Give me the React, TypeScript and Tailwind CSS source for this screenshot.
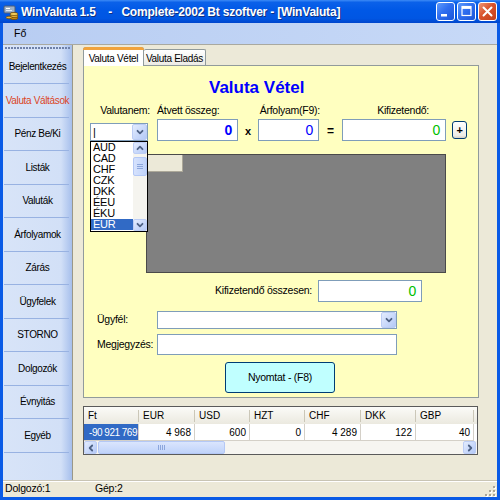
import React from 'react';

type Dir = 'down' | 'up' | 'left' | 'right';

const ARROWS: Record<Dir, string> = {
  down: 'M2.5 3.8 L5 6.3 L7.5 3.8',
  up: 'M2.5 6.2 L5 3.7 L7.5 6.2',
  left: 'M6.2 2.5 L3.7 5 L6.2 7.5',
  right: 'M3.8 2.5 L6.3 5 L3.8 7.5',
};

function ArrowBtn({ dir, className = '' }: { dir: Dir; className?: string }) {
  return (
    <div
      className={`flex shrink-0 items-center justify-center rounded-[2px] border border-[#bccdf5] bg-[linear-gradient(to_bottom_right,#e3ecfe,#b4c9f7)] ${className}`}
    >
      <svg width="10" height="10" viewBox="0 0 10 10">
        <path d={ARROWS[dir]} fill="none" stroke="#4d6185" strokeWidth="1.8" strokeLinecap="round" strokeLinejoin="round" />
      </svg>
    </div>
  );
}

function AppIcon() {
  return (
    <svg width="16" height="16" viewBox="0 0 16 16" className="shrink-0">
      <rect x="1" y="2" width="11" height="7" rx="1" fill="#9fb1c6" stroke="#4b5d78" strokeWidth="1" />
      <rect x="3" y="4" width="4" height="1" fill="#ffffff" />
      <rect x="3" y="6" width="6" height="1" fill="#dfe7f1" />
      <ellipse cx="11" cy="14" rx="4" ry="1.6" fill="#c98a12" stroke="#6b4300" strokeWidth="0.7" />
      <ellipse cx="11" cy="12" rx="4" ry="1.6" fill="#e6b43a" stroke="#6b4300" strokeWidth="0.7" />
      <ellipse cx="11" cy="10" rx="4" ry="1.6" fill="#f3cd5a" stroke="#6b4300" strokeWidth="0.7" />
      <ellipse cx="6" cy="13.5" rx="3" ry="1.3" fill="#e6b43a" stroke="#6b4300" strokeWidth="0.7" />
    </svg>
  );
}

function WinBtn({ kind }: { kind: 'min' | 'max' | 'close' }) {
  const bg =
    kind === 'close'
      ? 'bg-[linear-gradient(to_bottom_right,#f09575,#d9532c_45%,#c2401c)]'
      : 'bg-[linear-gradient(to_bottom_right,#5f9bfc,#2f6ef0_45%,#1c55d8)]';
  return (
    <div className={`flex h-[19px] w-[19px] items-center justify-center rounded-[3px] border border-white ${bg}`}>
      <svg width="17" height="17" viewBox="0 0 17 17">
        {kind === 'min' && <rect x="4" y="11" width="6" height="2.5" fill="#ffffff" />}
        {kind === 'max' && (
          <>
            <rect x="4" y="3.5" width="9" height="9" fill="none" stroke="#ffffff" strokeWidth="1.2" />
            <rect x="4" y="3.5" width="9" height="2.4" fill="#ffffff" />
          </>
        )}
        {kind === 'close' && (
          <path d="M4.5 4.5 L12.5 12.5 M12.5 4.5 L4.5 12.5" stroke="#ffffff" strokeWidth="2" strokeLinecap="round" />
        )}
      </svg>
    </div>
  );
}

function TitleBar() {
  return (
    <div className="flex h-[23px] shrink-0 items-center bg-[linear-gradient(to_bottom,#3d8bf6_0%,#0b61e9_10%,#0058e6_45%,#0056e3_80%,#0046cc_100%)] pl-[3px] pr-[3px]">
      <AppIcon />
      <span className="ml-[2px] whitespace-pre text-[12px] font-bold tracking-[-0.2px] text-white [text-shadow:1px_1px_0_#10307f]">
        WinValuta 1.5    -   Complete-2002 Bt szoftver - [WinValuta]
      </span>
      <div className="ml-auto flex gap-[2px]">
        <WinBtn kind="min" />
        <WinBtn kind="max" />
        <WinBtn kind="close" />
      </div>
    </div>
  );
}

const menuItems = [
  'Bejelentkezés',
  'Valuta Váltások',
  'Pénz Be/Ki',
  'Listák',
  'Valuták',
  'Árfolyamok',
  'Zárás',
  'Ügyfelek',
  'STORNO',
  'Dolgozók',
  'Évnyitás',
  'Egyéb',
];

function Sidebar() {
  return (
    <div className="flex w-[69px] shrink-0 flex-col bg-[linear-gradient(to_right,#d8e4f8_0%,#d2e0f7_84%,#a6bfec_100%)]">
      <div className="mx-[2px] mt-[2px] h-[2px] bg-[repeating-linear-gradient(to_right,#6f81a9_0_2px,transparent_2px_3px)]" />
      <div className="h-[1.5px]" />
      {menuItems.map((label, i) => (
        <div key={label}>
          <div
            className={`flex h-[32.5px] items-center justify-center whitespace-nowrap text-[10px] tracking-[-0.35px] ${i === 1 ? 'text-[#db4525]' : 'text-black'}`}
          >
            {label}
          </div>
          <div className="ml-[1px] mr-[3px] h-px bg-[#98b2e2]" />
        </div>
      ))}
    </div>
  );
}

function Combo({ className = '', children }: { className?: string; children?: React.ReactNode }) {
  return (
    <div className={`flex h-[18px] items-center border border-[#7f9db9] bg-white ${className}`}>
      <div className="flex-1 pl-[2px] text-[11px] leading-none">{children}</div>
      <ArrowBtn dir="down" className="h-[16px] w-[15px]" />
    </div>
  );
}

const currencies = ['AUD', 'CAD', 'CHF', 'CZK', 'DKK', 'ÉEU', 'ÉKU', 'EUR'];

function DropList() {
  return (
    <div className="absolute left-0 top-full z-20 flex h-[91px] w-[58px] border border-black bg-white">
      <div className="flex-1">
        {currencies.map((c) => (
          <div
            key={c}
            className={`h-[11px] pl-[2px] text-[11px] leading-[11px] ${c === 'EUR' ? 'bg-[#316ac5] text-white' : 'text-black'}`}
          >
            {c}
          </div>
        ))}
      </div>
      <div className="flex w-[14px] flex-col bg-[#f5f4ef]">
        <ArrowBtn dir="up" className="h-[12px] w-[14px]" />
        <div className="mt-[3px] flex h-[19px] w-[14px] flex-col items-center justify-center gap-[1px] rounded-[2px] border border-[#b4c8f6] bg-[linear-gradient(to_right,#d6e2fd,#c0d3fa)]">
          <div className="h-px w-[6px] bg-[#8ca6dc]" />
          <div className="h-px w-[6px] bg-[#8ca6dc]" />
          <div className="h-px w-[6px] bg-[#8ca6dc]" />
        </div>
        <div className="flex-1" />
        <ArrowBtn dir="down" className="h-[12px] w-[14px]" />
      </div>
    </div>
  );
}

function NumBox({ className = '', color, bold = false }: { className?: string; color: string; bold?: boolean }) {
  return (
    <div
      className={`flex h-[22px] items-center justify-end border border-[#7f9db9] bg-white pr-[5px] text-[14px] ${bold ? 'font-bold' : ''} ${color} ${className}`}
    >
      0
    </div>
  );
}

function Panel() {
  return (
    <div className="flex h-[333px] w-[396px] shrink-0 flex-col border border-[#919b9c] bg-[#ffffc0] text-[10.5px] tracking-[-0.25px]">
      <div className="ml-[125px] mt-[12px] h-[20px] text-[17px] font-bold leading-[20px] tracking-normal text-[#0000ff]">
        Valuta Vétel
      </div>

      <div className="mt-[6px] flex h-[12px] items-center whitespace-nowrap leading-none">
        <div className="ml-[6px] w-[60px] text-right">Valutanem:</div>
        <div className="ml-[7px] w-[81px]">Átvett összeg:</div>
        <div className="ml-[20px] w-[62px] text-right">Árfolyam(F9):</div>
        <div className="ml-[22px] w-[87px] text-right">Kifizetendő:</div>
      </div>

      <div className="relative z-20 mt-[3px] flex h-[22px] items-center">
        <div className="relative ml-[6px] mt-[4px] w-[58px]">
          <Combo className="w-[58px]">
            <span className="font-light">|</span>
          </Combo>
          <DropList />
        </div>
        <NumBox className="ml-[9px] w-[81px]" color="text-[#0000ff]" bold />
        <div className="w-[20px] pt-[2px] text-center text-[11px] font-bold">x</div>
        <NumBox className="w-[61px]" color="text-[#0000ff]" />
        <div className="w-[23px] pt-[1px] text-center text-[12px] font-bold">=</div>
        <NumBox className="w-[104px]" color="text-[#00c000]" />
        <div className="ml-[6px] flex h-[18px] w-[15px] items-center justify-center rounded-[3px] border border-[#003c74] bg-[linear-gradient(to_bottom,#ffffff,#ecebe6_85%,#d6d0c5)] text-[11px] font-bold leading-none">
          +
        </div>
      </div>

      <div className="ml-[62px] mt-[13px] h-[119px] w-[300px] border border-[#4a4a4a] bg-[#808080]">
        <div className="h-[17px] w-[36px] border-b border-r border-[#aca899] bg-[#ece9d8]" />
      </div>

      <div className="mt-[7px] flex h-[22px] items-center whitespace-nowrap">
        <div className="w-[228px] text-right">Kifizetendő összesen:</div>
        <NumBox className="ml-[6px] w-[104px]" color="text-[#00c000]" />
      </div>

      <div className="mt-[9px] flex h-[18px] items-center">
        <div className="ml-[13px] w-[60px]">Ügyfél:</div>
        <Combo className="w-[240px]" />
      </div>

      <div className="mt-[5px] flex h-[21px] items-center">
        <div className="ml-[13px] w-[60px]">Megjegyzés:</div>
        <div className="h-[21px] w-[240px] border border-[#7f9db9] bg-white" />
      </div>

      <div className="ml-[141px] mt-[7px] flex h-[31px] w-[110px] items-center justify-center rounded-[3px] border border-[#003c74] bg-[#c0ffff]">
        Nyomtat - (F8)
      </div>
    </div>
  );
}

function Tabs() {
  return (
    <div className="relative z-10 flex h-[18px] items-end whitespace-nowrap text-[10px] tracking-[-0.3px]">
      <div className="relative -mb-px flex h-[19px] w-[61px] items-center justify-center rounded-t-[3px] border border-b-0 border-[#919b9c] bg-white pt-[2px]">
        <div className="absolute -left-px -right-px -top-px h-[3px] rounded-t-[3px] bg-[#f1a33c]" />
        Valuta Vétel
      </div>
      <div className="flex h-[16px] w-[62px] items-center justify-center rounded-t-[2px] border border-b-0 border-l-0 border-[#919b9c] bg-[linear-gradient(to_bottom,#ffffff,#ecebe5)] pt-[1px]">
        Valuta Eladás
      </div>
    </div>
  );
}

const cols = [
  { h: 'Ft', v: '-90 921 769', w: 'w-[55px]' },
  { h: 'EUR', v: '4 968', w: 'w-[56px]' },
  { h: 'USD', v: '600', w: 'w-[55px]' },
  { h: 'HZT', v: '0', w: 'w-[55px]' },
  { h: 'CHF', v: '4 289', w: 'w-[56px]' },
  { h: 'DKK', v: '122', w: 'w-[55px]' },
  { h: 'GBP', v: '40', w: 'w-[58px]' },
];

function BottomGrid() {
  return (
    <div className="mt-[8px] flex h-[49px] w-[395px] shrink-0 flex-col border border-[#5a5a5a] bg-white text-[10px]">
      <div className="flex h-[17px] bg-[linear-gradient(to_bottom,#fbfbf8,#ebe9df)]">
        {cols.map((c) => (
          <div key={c.h} className={`flex items-center ${c.w} pl-[4px]`}>
            <span className="flex-1">{c.h}</span>
            <div className="h-[12px] w-px bg-[#cbc7b8]" />
          </div>
        ))}
      </div>
      <div className="flex h-[17px]">
        {cols.map((c, i) => (
          <div
            key={c.h}
            className={`flex items-center justify-end overflow-hidden whitespace-nowrap border-b border-r border-[#d4d0c8] ${c.w} ${i === 0 ? 'bg-[#316ac5] pr-[1px] tracking-[-0.5px] text-white' : 'pr-[3px]'}`}
          >
            {c.v}
          </div>
        ))}
      </div>
      <div className="flex h-[13px] bg-[#f6f5f1]">
        <ArrowBtn dir="left" className="h-[13px] w-[13px]" />
        <div className="ml-px flex h-[13px] w-[127px] items-center justify-center gap-[1px] rounded-[2px] border border-[#b4c8f6] bg-[linear-gradient(to_bottom,#dae5fd,#c0d3fa)]">
          <div className="h-[5px] w-px bg-[#8ca6dc]" />
          <div className="h-[5px] w-px bg-[#8ca6dc]" />
          <div className="h-[5px] w-px bg-[#8ca6dc]" />
          <div className="h-[5px] w-px bg-[#8ca6dc]" />
        </div>
        <div className="flex-1" />
        <ArrowBtn dir="right" className="h-[13px] w-[13px]" />
        <div className="w-[1px]" />
      </div>
    </div>
  );
}

function StatusBar() {
  return (
    <div className="flex h-[17px] shrink-0 items-center border-t border-[#c8c4b4] text-[10.5px] tracking-[-0.2px] shadow-[inset_0_1px_0_#ffffff]">
      <div className="w-[92px] pl-[2px]">Dolgozó:1</div>
      <div>Gép:2</div>
      <svg width="12" height="12" viewBox="0 0 12 12" className="ml-auto mr-[1px] mt-[3px]">
        {[
          [9, 1],
          [9, 5],
          [5, 5],
          [9, 9],
          [5, 9],
          [1, 9],
        ].map(([x, y]) => (
          <g key={`${x}-${y}`}>
            <rect x={x + 1} y={y + 1} width="2" height="2" fill="#ffffff" />
            <rect x={x} y={y} width="2" height="2" fill="#a8a496" />
          </g>
        ))}
      </svg>
    </div>
  );
}

export default function App() {
  return (
    <div className="flex h-[500px] w-[500px] flex-col overflow-hidden bg-[#0a5be6] font-['Liberation_Sans',Arial,sans-serif] text-black">
      <TitleBar />
      <div className="mx-[3px] mb-[3px] flex min-h-0 flex-1 flex-col bg-[#ece9d8]">
        <div className="flex h-[22px] shrink-0 items-center border-b border-[#a9a9a0] bg-[linear-gradient(to_right,#b8cdf2,#c7d9f7)] pl-[11px] text-[10.5px]">
          Fő
        </div>
        <div className="flex min-h-0 flex-1">
          <Sidebar />
          <div className="w-[3px] shrink-0 border-l border-[#9a9888]" />
          <div className="flex min-w-0 flex-1 flex-col pl-[8px] pt-[2px]">
            <Tabs />
            <Panel />
            <BottomGrid />
          </div>
        </div>
        <StatusBar />
      </div>
    </div>
  );
}
